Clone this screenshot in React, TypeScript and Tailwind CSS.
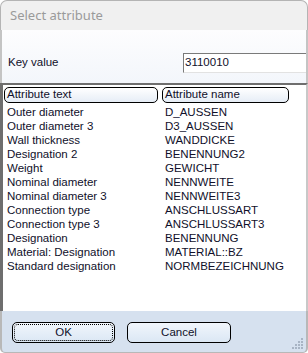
import React from "react";

const rows: [string, string][] = [
  ["Outer diameter", "D_AUSSEN"],
  ["Outer diameter 3", "D3_AUSSEN"],
  ["Wall thickness", "WANDDICKE"],
  ["Designation 2", "BENENNUNG2"],
  ["Weight", "GEWICHT"],
  ["Nominal diameter", "NENNWEITE"],
  ["Nominal diameter 3", "NENNWEITE3"],
  ["Connection type", "ANSCHLUSSART"],
  ["Connection type 3", "ANSCHLUSSART3"],
  ["Designation", "BENENNUNG"],
  ["Material: Designation", "MATERIAL::BZ"],
  ["Standard designation", "NORMBEZEICHNUNG"],
];

export default function App() {
  return (
    <div
      className="relative w-[308px] h-[353px] overflow-hidden bg-white flex flex-col text-[11.5px] text-[#10102a]"
      style={{ fontFamily: '"Liberation Sans", Arial, sans-serif' }}
    >
      {/* title bar */}
      <div className="h-[30px] shrink-0 bg-[#f0f0f0] rounded-t-[7px] border-t border-l border-r border-[#b4b4b4] flex items-center pl-[9px]">
        <span className="text-[13px] text-[#9a9a9a]" style={{ fontFamily: '"Noto Sans", sans-serif' }}>
          Select attribute
        </span>
      </div>
      {/* key value area */}
      <div className="h-[53px] shrink-0 border-l-2 border-r-2 border-[#c4c4c4] bg-gradient-to-b from-[#fdfdfe] to-[#f3f6fb] flex items-end pb-[10px]">
        <span className="pl-[6px] w-[181px] pb-[2px]">Key value</span>
        <div className="flex-1 h-[20px] bg-white border-t border-l border-[#7a7a7a] border-b border-b-[#e2e2e2] flex items-center pl-[1px]">
          3110010
        </div>
      </div>
      {/* list */}
      <div className="h-[228px] shrink-0 bg-white border-l-[3px] border-t-2 border-[#6e6e6e] border-r-2 border-r-[#c8c8c8] pt-[2px] pl-[1px]">
        <div className="flex h-[16px] gap-[4px]">
          <div className="w-[154px] h-[16px] rounded-[5px] border border-black bg-gradient-to-b from-white to-[#e6edf6] flex items-center pl-[2px]">
            Attribute text
          </div>
          <div className="w-[127px] h-[16px] rounded-[5px] border border-black bg-gradient-to-b from-white to-[#e6edf6] flex items-center pl-[2px]">
            Attribute name
          </div>
        </div>
        <div className="pt-[3px]">
          {rows.map(([a, b]) => (
            <div key={a} className="flex h-[14px] items-center">
              <span className="w-[161px] pl-[3px] whitespace-nowrap">{a}</span>
              <span className="whitespace-nowrap">{b}</span>
            </div>
          ))}
        </div>
      </div>
      {/* bottom */}
      <div className="flex-1 bg-[#d6e1ef] border-l-2 border-r-2 border-b border-[#b8b8b8] rounded-b-[5px] flex items-start pt-[11px] pl-[10px] gap-[12px] relative">
        <button className="w-[103px] h-[21px] rounded-[5px] border border-black bg-gradient-to-b from-[#f1f6fc] to-[#dbe7f4] p-[1px]">
          <div className="w-full h-full rounded-[4px] border border-dotted border-black flex items-center justify-center">
            OK
          </div>
        </button>
        <button className="w-[104px] h-[21px] rounded-[5px] border border-black bg-gradient-to-b from-[#f1f6fc] to-[#dbe7f4] flex items-center justify-center">
          Cancel
        </button>
        <svg className="absolute right-[2px] bottom-[2px]" width="12" height="12" viewBox="0 0 12 12">
          {[
            [9, 0], [6, 3], [9, 3], [3, 6], [6, 6], [9, 6], [0, 9], [3, 9], [6, 9], [9, 9],
          ].map(([x, y], i) => (
            <rect key={i} x={x} y={y} width="2" height="2" fill="#a8b4c4" />
          ))}
        </svg>
      </div>
    </div>
  );
}
